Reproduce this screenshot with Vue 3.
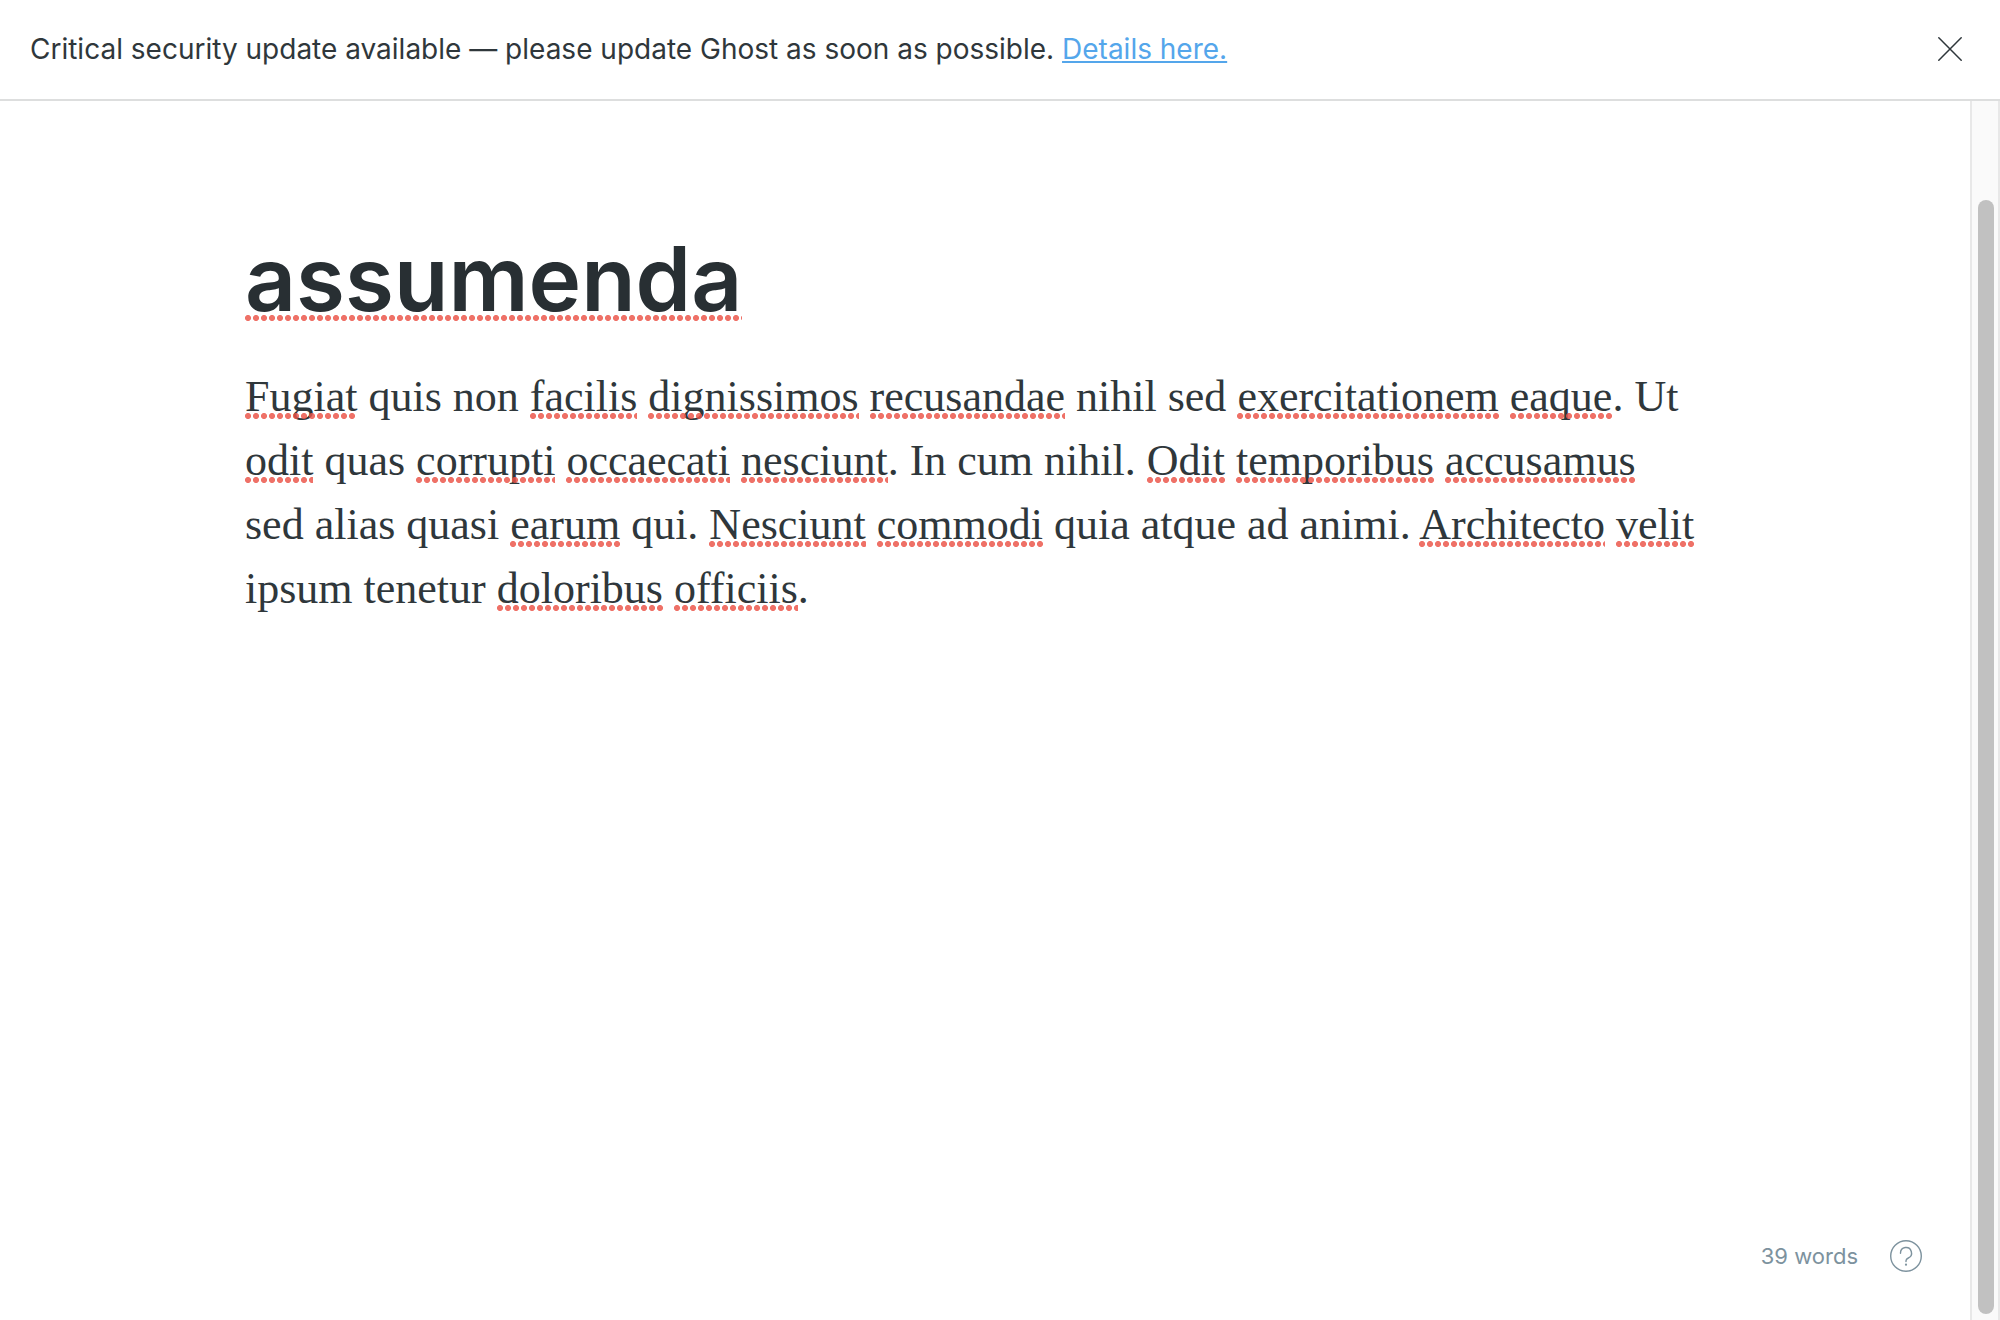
<script setup>
const title = 'assumenda'

const flagged = new Set([
  'Fugiat', 'facilis', 'dignissimos', 'recusandae', 'exercitationem', 'eaque',
  'odit', 'corrupti', 'occaecati', 'nesciunt', 'Odit', 'temporibus', 'accusamus',
  'earum', 'Nesciunt', 'commodi', 'Architecto', 'velit', 'doloribus', 'officiis',
])

const lines = [
  'Fugiat quis non facilis dignissimos recusandae nihil sed exercitationem eaque. Ut',
  'odit quas corrupti occaecati nesciunt. In cum nihil. Odit temporibus accusamus',
  'sed alias quasi earum qui. Nesciunt commodi quia atque ad animi. Architecto velit',
  'ipsum tenetur doloribus officiis.',
].map((line) =>
  line.split(/(\w+)/).filter(Boolean).map((text) => ({ text, flagged: flagged.has(text) })),
)
</script>

<template>
  <div class="app">
    <header class="alert">
      <p class="alert-text">Critical security update available — please update Ghost as soon as possible. <a href="#">Details here.</a></p>
      <button class="close" type="button" aria-label="Close">
        <svg width="24" height="24" viewBox="0 0 24 24" fill="none" stroke="currentColor" stroke-width="1.5" stroke-linecap="round">
          <path d="M.8.8l22.4 22.4M23.2.8L.8 23.2" />
        </svg>
      </button>
    </header>
    <div class="workspace">
      <main class="editor">
        <article class="post">
          <h1 class="title"><span class="misspelt">{{ title }}</span></h1>
          <p class="body"><span v-for="(line, i) in lines" :key="i" class="line"><span v-for="(part, j) in line" :key="j" :class="{ misspelt: part.flagged }">{{ part.text }}</span></span></p>
        </article>
        <footer class="status">
          <span>39 words</span>
          <button class="help" type="button" aria-label="Help">
            <svg width="32" height="32" viewBox="0 0 32 32" fill="none" stroke="currentColor" stroke-width="1.4" stroke-linecap="round">
              <circle cx="16" cy="16" r="15.3" />
              <path d="M10.5 13.3V13a5.5 5.5 0 1 1 7.800 5c-1.5.7-2.3 1.4-2.3 2.7v.9" />
              <circle cx="16" cy="24.7" r="1.1" fill="currentColor" stroke="none" />
            </svg>
          </button>
        </footer>
      </main>
      <div class="track" aria-hidden="true"><div class="thumb"></div></div>
    </div>
  </div>
</template>

<style>
body {
  margin: 0;
  background: #fff;
}
</style>

<style scoped>
.app {
  display: flex;
  flex-direction: column;
  min-height: 100vh;
  color: #2f373b;
  font-family: Inter, "Liberation Sans", sans-serif;
}
.alert {
  display: flex;
  align-items: center;
  justify-content: space-between;
  padding: 28px 38px 29px 30px;
  border-bottom: 2px solid #dddede;
}
.alert-text {
  margin: 0;
  font-size: 28px;
  line-height: 42px;
}
.alert-text a {
  color: #54a6eb;
  text-decoration: underline;
  text-decoration-thickness: 2px;
  text-underline-offset: 2px;
  text-decoration-skip-ink: none;
}
button {
  display: flex;
  padding: 0;
  border: 0;
  background: none;
  color: inherit;
  cursor: pointer;
}
.workspace {
  display: flex;
  flex: 1;
}
.editor {
  display: flex;
  flex: 1;
  flex-direction: column;
  justify-content: space-between;
}
.post {
  box-sizing: border-box;
  width: 100%;
  max-width: 1480px;
  margin: 0 auto;
  padding-top: 120px;
}
.title {
  margin: 0;
  color: #282f33;
  font-size: 89px;
  font-weight: 600;
  line-height: 116px;
}
.body {
  margin: 28px 0 0;
  font-family: Georgia, "Liberation Serif", serif;
  font-size: 44px;
  line-height: 64px;
}
.line {
  display: block;
  white-space: pre;
}
.misspelt {
  position: relative;
}
.misspelt::after {
  content: "";
  position: absolute;
  right: 0;
  bottom: 2px;
  left: 0;
  height: 6px;
  background: radial-gradient(circle at 3px 3px, rgb(235 82 70 / 82%) 2.7px, transparent 3.3px) 0 0 / 8px 6px repeat-x;
}
.title .misspelt::after {
  bottom: 11px;
}
.status {
  display: flex;
  align-items: center;
  justify-content: flex-end;
  gap: 32px;
  padding: 0 48px 48px 0;
  color: #7d929e;
  font-size: 22px;
  line-height: 32px;
}
.track {
  display: flex;
  box-sizing: border-box;
  width: 30px;
  padding: 99px 4px 6px 6px;
  border: solid #e8e8e8;
  border-width: 0 2px;
  background: #fafafa;
}
.thumb {
  flex: 1;
  border-radius: 8px;
  background: #c1c1c1;
}
</style>
